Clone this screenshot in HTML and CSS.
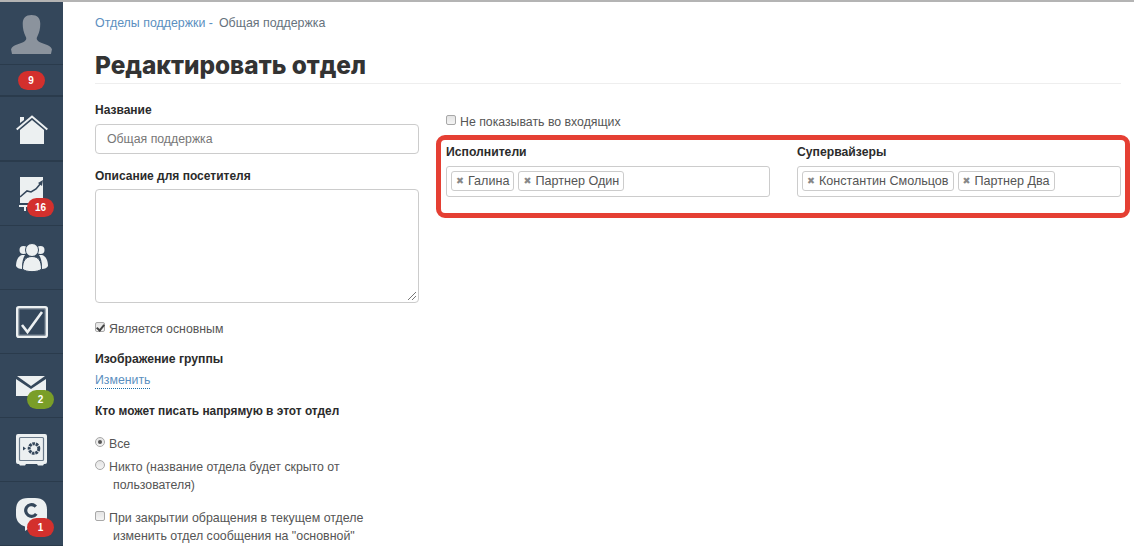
FILE: index.html
```html
<!DOCTYPE html>
<html lang="ru">
<head>
<meta charset="utf-8">
<title>Редактировать отдел</title>
<link rel="stylesheet" href="styles.css">
</head>
<body>
<div class="app">
  <nav class="sidebar">
    <div class="nav-item nav-avatar">
      <svg class="icon-avatar" viewBox="0 0 42 40"><path fill="#8b939d" d="M21 0c6 0 9 3 9 9 0 5-1 9-3 13-1 2-1 3 1 5 4 3 12 3 14 8l-1 5H1l-1-5c2-5 10-5 14-8 2-2 2-3 1-5-2-4-3-8-3-13 0-6 3-9 9-9z"/></svg>
    </div>
    <div class="nav-item nav-count"><span class="badge badge-static">9</span></div>
    <div class="nav-item">
      <svg class="icon icon-home" viewBox="0 0 32 32"><path fill="#ecf0f1" d="M4 16 16 6l12 10v14H4z"/><path fill="none" stroke="#ecf0f1" stroke-width="2" d="M.7 15.500 16 2.500l15.300 13"/><path fill="#ecf0f1" d="M4 3h4v3l-4 3z"/></svg>
    </div>
    <div class="nav-item">
      <svg class="icon icon-tall" viewBox="0 0 32 36"><path fill="#ecf0f1" d="M4 1h23v26H4z"/><path fill="none" stroke="#34475b" stroke-width="1.6" d="M4 21l7-6 4 1 5-3 5-6"/><path fill="#34475b" d="M27 4l-1 6-4-3z"/><path fill="#ecf0f1" d="M3 29h12v2H10v4H8v-4H3z"/></svg>
      <span class="badge badge-red">16</span>
    </div>
    <div class="nav-item">
      <svg class="icon" viewBox="0 0 32 32"><g fill="#ecf0f1"><circle cx="7.500" cy="8" r="4"/><circle cx="24.500" cy="8" r="4"/><path d="M0 24c0-5 2-10 6-11h3c-2 3-3 7-3 14-3 0-5-1-6-3zM32 24c0-5-2-10-6-11h-3c2 3 3 7 3 14 3 0 5-1 6-3z"/></g><circle cx="16" cy="8" r="6.500" fill="#ecf0f1" stroke="#34475b" stroke-width="1"/><path fill="#ecf0f1" stroke="#34475b" stroke-width="1" d="M6.500 27c0-8 3-12.500 9.500-12.500s9.500 4.500 9.500 12.500c-3 3.500-16 3.500-19 0z"/></svg>
    </div>
    <div class="nav-item">
      <svg class="icon" viewBox="0 0 32 32"><rect x="1.300" y="1.300" width="29.400" height="29.400" rx="1.500" fill="none" stroke="#ecf0f1" stroke-width="2.600"/><rect x="3" y="3" width="26" height="26" fill="none" stroke="#8b97a3" stroke-width=".8"/><path fill="none" stroke="#ecf0f1" stroke-width="2.600" d="M6 19l5.500 7L26 6"/></svg>
    </div>
    <div class="nav-item">
      <svg class="icon" viewBox="0 0 32 20"><path fill="#ecf0f1" d="M0 3 15 13 30 3v17H0z"/><path fill="#ecf0f1" d="M1 0h28L15 10z"/></svg>
      <span class="badge badge-green">2</span>
    </div>
    <div class="nav-item">
      <svg class="icon" viewBox="0 0 32 32"><path fill="#ecf0f1" d="M2 0h27a2 2 0 0 1 2 2v26a2 2 0 0 1-2 2h-1l-1 1.500h-5L21 30H10l-1 1.500H4L3 30H2a2 2 0 0 1-2-2V2a2 2 0 0 1 2-2z"/><rect x="3.500" y="3.500" width="24" height="23" rx="1" fill="none" stroke="#6b7b8b" stroke-width="1.200"/><circle cx="18" cy="14.500" r="4.800" fill="none" stroke="#34475b" stroke-width="3" stroke-dasharray="2.600 .8"/><path fill="#34475b" d="M7 12.500l3 2-3 2z"/></svg>
    </div>
    <div class="nav-item">
      <svg class="icon icon-tall" viewBox="0 0 32 36"><path fill="#ecf0f1" d="M12 2h7c8 0 12 4 12 12v7c0 6-4 10-12 10h-4l-6 4v-4.500C4 29 0 25 0 19v-5C0 6 4 2 12 2z"/><circle cx="15.500" cy="14.500" r="5.800" fill="none" stroke="#34475b" stroke-width="3.200" stroke-dasharray="28 8.400" transform="rotate(35 15.500 14.500)"/></svg>
      <span class="badge badge-red">1</span>
    </div>
  </nav>

  <main class="content">
    <div class="crumbs"><a class="crumb-link">Отделы поддержки -</a><span class="crumb-current">Общая поддержка</span></div>
    <h1 class="title">Редактировать отдел</h1>
    <div class="columns">
      <section class="col-left">
        <label class="field-label">Название</label>
        <div class="input">Общая поддержка</div>
        <label class="field-label label-desc">Описание для посетителя</label>
        <div class="textarea">
          <svg class="grip" viewBox="0 0 10 10"><path fill="none" stroke="#777" stroke-width="1" d="M1 9l8-8M5 9l4-4"/></svg>
        </div>
        <div class="check-row row-main"><input type="checkbox" checked><span>Является основным</span></div>
        <div class="field-label label-image">Изображение группы</div>
        <a class="dotted-link">Изменить</a>
        <div class="field-label label-who">Кто может писать напрямую в этот отдел</div>
        <div class="check-row row-all"><input type="radio" name="who" checked><span>Все</span></div>
        <div class="check-row row-none"><input type="radio" name="who"><span>Никто (название отдела будет скрыто от<br><span class="cont">пользователя)</span></span></div>
        <div class="check-row row-close"><input type="checkbox"><span>При закрытии обращения в текущем отделе<br><span class="cont">изменить отдел сообщения на "основной"</span></span></div>
      </section>
      <section class="col-right">
        <div class="check-row row-hide"><input type="checkbox"><span>Не показывать во входящих</span></div>
        <div class="assignees">
          <div class="assign-col">
            <div class="field-label">Исполнители</div>
            <div class="tagbox">
              <span class="tag"><i class="x">✖</i>Галина</span>
              <span class="tag"><i class="x">✖</i>Партнер Один</span>
            </div>
          </div>
          <div class="assign-col">
            <div class="field-label">Супервайзеры</div>
            <div class="tagbox">
              <span class="tag"><i class="x">✖</i>Константин Смольцов</span>
              <span class="tag"><i class="x">✖</i>Партнер Два</span>
            </div>
          </div>
        </div>
      </section>
    </div>
  </main>
</div>
</body>
</html>
```
FILE: styles.css
```css
* { box-sizing: border-box; }
html, body { margin: 0; height: 546px; overflow: hidden; background: #fff; }
body { font-family: "Liberation Sans", Arial, sans-serif; font-size: 12.3px; color: #555; }
.app { display: flex; height: 546px; border-top: 2px solid #b4b4b4; }
.sidebar { width: 63px; flex: none; display: flex; flex-direction: column; background: #34475b; }
.nav-item { position: relative; height: 64px; flex: none; display: flex; align-items: center; justify-content: center; border-bottom: 1px solid #2a3b4c; }
.nav-avatar { height: 63px; }
.nav-count { height: 32px; border-bottom-width: 2px; }
.nav-item:nth-child(3) { height: 65px; border-bottom-width: 2px; }
.icon { width: 32px; height: 32px; }
.icon-home { margin-top: 2px; }
.icon-tall { height: 36px; }
.icon-avatar { width: 41px; height: 39px; margin-top: 2px; }
.badge { display: flex; align-items: center; justify-content: center; width: 27px; height: 19px; border-radius: 10px; color: #fff; font: bold 10px "Liberation Sans", Arial, sans-serif; }
.badge-static { background: #d3302d; margin-left: -1px; }
.badge-red, .badge-green { position: absolute; left: 27px; bottom: 8px; }
.badge-red { background: #d3302d; }
.badge-green { background: #7a9e28; }

.content { flex: 1; min-width: 0; padding: 0 13px 0 32px; }
.crumbs { display: flex; gap: 6px; padding-top: 14px; line-height: 15px; font-size: 12.4px; }
.crumb-link { color: #5b8fc0; }
.crumb-current { color: #66727d; }
.title { margin: 16px 0 0; padding-top: 2px; height: 37px; font: 800 24.4px/32px "Inter", "Liberation Sans", sans-serif; color: #333; border-bottom: 1px solid #eee; }
.columns { display: flex; gap: 27px; }
.col-left { width: 324px; flex: none; padding-top: 19px; }
.col-right { flex: 1; min-width: 0; padding-top: 29px; }
.field-label { display: block; font-weight: bold; color: #2b2b2b; line-height: 15px; font-size: 12px; }
.input { margin-top: 6px; height: 30px; border: 1px solid #ccc; border-radius: 4px; padding: 0 11px; line-height: 28px; color: #777; }
.label-desc { margin-top: 15px; }
.textarea { position: relative; margin-top: 5px; height: 114px; border: 1px solid #ccc; border-radius: 4px; }
.grip { position: absolute; right: 1px; bottom: 1px; width: 10px; height: 10px; }
.check-row { display: flex; align-items: flex-start; gap: 4px; line-height: 18px; color: #555; }
.check-row input { appearance: none; position: relative; margin: 2px 0 0; width: 10px; height: 10px; flex: none; border: 1px solid #a8a8a8; border-radius: 2px; background: linear-gradient(#e4e4e4, #f4f4f4); }
.check-row input[type="radio"] { border-radius: 50%; }
.check-row input[type="radio"]:checked::after { content: ""; position: absolute; left: 2px; top: 2px; width: 4px; height: 4px; border-radius: 50%; background: #555; }
.check-row input[type="checkbox"]:checked::after { content: ""; position: absolute; left: 2px; top: 0; width: 3px; height: 6px; border: solid #444; border-width: 0 2px 2px 0; transform: rotate(40deg); }
.cont { padding-left: 4px; }
.row-main { margin-top: 17px; }
.label-image { margin-top: 14px; font-size: 12.2px; }
.dotted-link { display: inline-block; margin-top: 5px; color: #5b8fc0; line-height: 16px; border-bottom: 1px dotted #1a6ea8; }
.label-who { margin-top: 15px; font-size: 11.9px; }
.row-all { margin-top: 16px; }
.row-none { margin-top: 5px; }
.row-close { margin-top: 15px; font-size: 12.4px; }
.assignees { display: flex; gap: 27px; margin: 4px -9px 0 -10px; padding: 5px 4px 0 5px; height: 83px; border: 5px solid #e53f33; border-radius: 9px; }
.assign-col { flex: 1; min-width: 0; }
.assign-col .field-label { font-size: 12.2px; }
.tagbox { display: flex; gap: 4px; margin-top: 6px; height: 31px; padding: 4px; border: 1px solid #ccc; border-radius: 3px; }
.tag { display: flex; align-items: center; height: 20px; padding: 0 4px; border: 1px solid #ccc; border-radius: 3px; color: #555; font-size: 12.6px; white-space: nowrap; }
.x { font: normal 9.5px/1 "DejaVu Sans", sans-serif; color: #888; margin-right: 4px; }
```
